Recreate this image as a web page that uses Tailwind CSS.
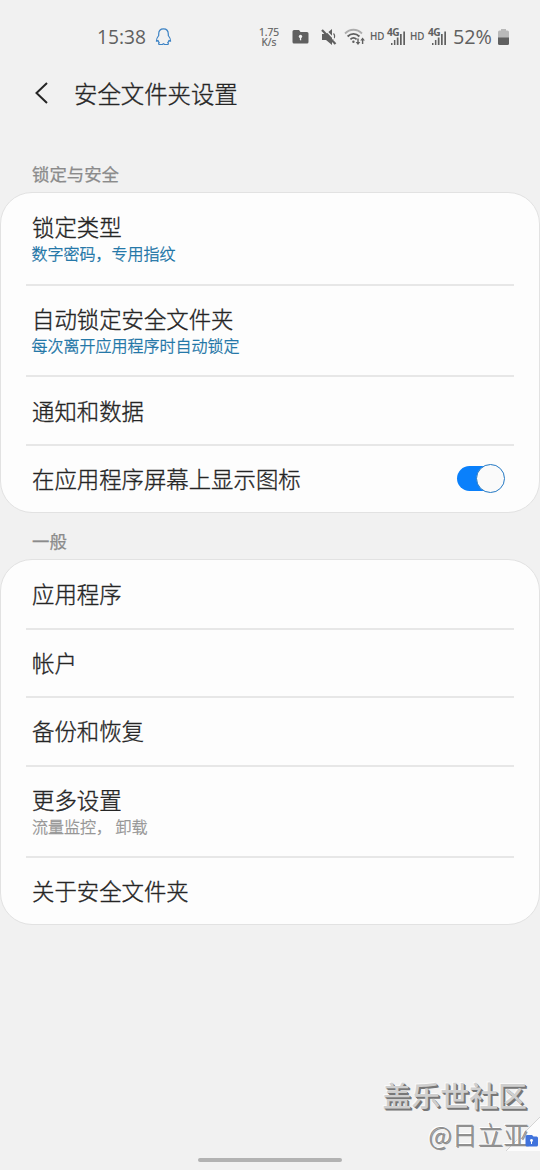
<!DOCTYPE html>
<html lang="zh-CN">
<head>
<meta charset="utf-8">
<title>安全文件夹设置</title>
<script src="https://cdn.jsdelivr.net/npm/@tailwindcss/browser@4"></script>
</head>
<body class="bg-[#f1f1f1]">
<div class="relative w-[540px] h-[1170px] overflow-hidden bg-[#f1f1f1] font-['Noto_Sans_CJK_SC',sans-serif] font-light text-[#252525] flex flex-col">
  <!-- Status bar -->
  <header class="h-[60px] shrink-0 pt-[15px] font-normal text-[#606060] font-['Open_Sans','Noto_Sans',sans-serif]">
    <div class="flex h-[44px] items-center pl-[97px]">
      <span class="w-[58px] text-[19.2px] leading-none whitespace-nowrap">15:38</span>
      <svg class="w-[17px] h-[18px] shrink-0" viewBox="0 0 17 18" fill="none" stroke="#3b82c4" stroke-width="1.2" stroke-linejoin="round"><path d="M8.500 .8C5.400 .8 3.700 3 3.700 6v1.500C2.500 9 1.200 11 1.400 13.200c.6.3 1.200-.5 1.600-.9.3 1 .7 1.700 1.300 2.300-.8.5-.8 1.200-.2 1.900h3.200l1.200-.8 1.200.8h3.200c.6-.7.6-1.400-.2-1.900.6-.6 1-1.300 1.300-2.300.4.4 1 1.200 1.600.9.2-2.200-1.100-4.200-2.300-5.700V6c0-3-1.700-5.200-4.800-5.200z"/></svg>
      <div class="ml-[85px] w-[24px] flex flex-col items-center text-[10.200px] leading-[10px] whitespace-nowrap [-webkit-text-stroke:0.2px]"><span>1.75</span><span>K/s</span></div>
      <svg class="ml-[11px] w-[17px] h-[16px] shrink-0" viewBox="0 0 17 16"><path fill="#606060" d="M2 1h5l1.500 2H15a1.500 1.500 0 0 1 1.500 1.500v8.500a1.500 1.500 0 0 1-1.500 1.500H2A1.500 1.500 0 0 1 .5 13V2.500A1.500 1.500 0 0 1 2 1z"/><circle cx="8.500" cy="7.400" r="1.700" fill="#f1f1f1"/><path fill="#f1f1f1" d="M7.900 8h1.300v3.300H7.900z"/></svg>
      <svg class="ml-[12px] w-[17px] h-[18px] shrink-0" viewBox="0 0 17 18"><path fill="#606060" d="M1 6h4l6-5v16l-6-5H1z"/><path d="M12.500 5.500c1.200 1.200 1.200 4 0 6" fill="none" stroke="#606060" stroke-width="1.200"/><path d="M3.500 1l12.500 13" stroke="#f1f1f1" stroke-width="1.500"/><path d="M1 2l13.500 14" stroke="#606060" stroke-width="2.200"/></svg>
      <svg class="ml-[6px] w-[22px] h-[18px] shrink-0" viewBox="0 0 22 18" fill="none" stroke="#606060" stroke-width="1.800"><path stroke="#adadad" d="M1 5.500c5-5 12-5 17 0"/><path d="M3.600 8.500c3.500-3.500 8.300-3.500 11.800 0M6.400 11.300c1.800-1.700 4.400-1.700 6.200 0"/><circle cx="9.400" cy="13.700" r="1.200" fill="#606060" stroke="none"/><path fill="#606060" stroke="none" d="M13.300 10.500h1.400V14h1.600L14 17l-2.300-3h1.600zM17.900 16h1.400v-3.500h1.600L18.600 9.500l-2.300 3h1.600z"/></svg>
      <span class="ml-[4px] w-[17px] text-[9.800px] leading-none font-semibold">HD</span>
      <div class="relative w-[19px] h-[20px] shrink-0"><span class="absolute left-0 top-0 text-[10.200px] leading-[10px] font-bold tracking-[-0.6px]">4G</span><svg class="w-[19px] h-[20px]" viewBox="0 0 19 20"><path fill="#606060" d="M4 16h1.500v2H4zM6.900 13h1.500v5H6.900zM9.800 10.500h1.700V18H9.800zM13 7h1.700v11H13zM16.300 4.500H18V18h-1.700z"/></svg></div>
      <span class="ml-[4px] w-[18px] text-[9.800px] leading-none font-semibold">HD</span>
      <div class="relative w-[19px] h-[20px] shrink-0"><span class="absolute left-0 top-0 text-[10.200px] leading-[10px] font-bold tracking-[-0.6px]">4G</span><svg class="w-[19px] h-[20px]" viewBox="0 0 19 20"><path fill="#606060" d="M4 16h1.500v2H4zM6.900 13h1.500v5H6.900zM9.800 10.500h1.700V18H9.800zM13 7h1.700v11H13zM16.300 4.500H18V18h-1.700z"/></svg></div>
      <span class="ml-[6px] w-[45px] text-[19.800px] leading-none whitespace-nowrap">52%</span>
      <svg class="w-[11px] h-[16px] shrink-0" viewBox="0 0 11 16"><path fill="#b9b9b9" d="M3 0h5v1.500h1.500A1.500 1.500 0 0 1 11 3v6H0V3a1.500 1.500 0 0 1 1.500-1.500H3z"/><path fill="#606060" d="M0 8.500h11v6a1.500 1.500 0 0 1-1.500 1.500h-8A1.500 1.500 0 0 1 0 14.500z"/></svg>
    </div>
  </header>

  <!-- Title -->
  <div class="h-[66px] shrink-0 flex items-center pl-[34px] [-webkit-text-stroke:0.35px]">
    <svg class="w-[15px] h-[22px]" viewBox="0 0 15 22" fill="none" stroke="#252525" stroke-width="2"><path d="M13 1 2.500 11 13 21"/></svg>
    <h1 class="ml-[25px] text-[23.4px] leading-[24px]">安全文件夹设置</h1>
  </div>

  <h2 class="h-[66px] shrink-0 pt-[39px] pl-[32px] text-[17.4px] leading-[18px] font-normal text-[#8b8b8b] [-webkit-text-stroke:0.25px]">锁定与安全</h2>
  <section class="h-[321px] shrink-0 rounded-[32px] border border-[#e2e2e2] bg-[#fdfdfd] px-[25px] [-webkit-text-stroke:0.35px]">
    <div class="h-[92.500px] border-b-2 border-[#e7e7e7] pl-[6px] pt-[21px]">
      <p class="text-[22.4px] leading-[24px]">锁定类型</p>
      <p class="mt-[6px] -ml-[0.5px] text-[16px] leading-[18px] text-[#1b74a6]">数字密码，专用指纹</p>
    </div>
    <div class="h-[91.500px] border-b-2 border-[#e7e7e7] pl-[6px] pt-[20px]">
      <p class="text-[22.4px] leading-[24px]">自动锁定安全文件夹</p>
      <p class="mt-[6px] -ml-[0.5px] text-[16px] leading-[18px] text-[#1b74a6]">每次离开应用程序时自动锁定</p>
    </div>
    <div class="h-[68.500px] border-b-2 border-[#e7e7e7] pl-[6px] pb-[1px] flex items-center"><p class="text-[22.4px] leading-[24px]">通知和数据</p></div>
    <div class="h-[66.500px] pl-[6px] pr-[9px] flex items-center justify-between">
      <p class="pb-[2px] text-[22.4px] leading-[24px]">在应用程序屏幕上显示图标</p>
      <div class="w-[48px] h-[30px] flex items-center">
        <div class="w-[46px] h-[25px] shrink-0 rounded-full bg-[#0a80fb] flex items-center">
          <div class="ml-[19px] size-[29px] shrink-0 rounded-full border-[1.5px] border-[#2479c4] bg-[#fafafa]"></div>
        </div>
      </div>
    </div>
  </section>

  <h2 class="h-[46px] shrink-0 pt-[19px] pl-[32px] text-[17.4px] leading-[18px] font-normal text-[#8b8b8b] [-webkit-text-stroke:0.25px]">一般</h2>
  <section class="h-[366px] shrink-0 rounded-[32px] border border-[#e2e2e2] bg-[#fdfdfd] px-[25px] [-webkit-text-stroke:0.35px]">
    <div class="h-[69.500px] border-b-2 border-[#e7e7e7] pl-[6px] pb-[1px] flex items-center"><p class="text-[22.4px] leading-[24px]">应用程序</p></div>
    <div class="h-[68.500px] border-b-2 border-[#e7e7e7] pl-[6px] pb-[2px] flex items-center"><p class="text-[22.4px] leading-[24px]">帐户</p></div>
    <div class="h-[68.500px] border-b-2 border-[#e7e7e7] pl-[6px] pb-[2px] flex items-center"><p class="text-[22.4px] leading-[24px]">备份和恢复</p></div>
    <div class="h-[91.500px] border-b-2 border-[#e7e7e7] pl-[6px] pt-[20px]">
      <p class="text-[22.4px] leading-[24px]">更多设置</p>
      <p class="mt-[6px] text-[16px] leading-[18px] text-[#959595]">流量监控， 卸载</p>
    </div>
    <div class="h-[66px] pl-[6px] pb-[2px] flex items-center"><p class="text-[22.4px] leading-[24px]">关于安全文件夹</p></div>
  </section>

  <!-- Navigation handle -->
  <div class="mt-auto mb-[8px] mx-auto w-[144px] h-[4px] rounded-full bg-[#b2b2b2]"></div>

  <!-- Corner badge and signature overlay -->
  <svg class="absolute right-0 bottom-0 w-[170px] h-[110px]" viewBox="0 0 170 110">
    <path d="M170 57v34h-34z" fill="#fcfcfc"/><path d="M136 91l34-34" stroke="#d4d4d4"/>
  </svg>
  <div class="absolute right-[13px] top-[1076px] text-[28.900px] leading-[36px] font-medium whitespace-nowrap text-[#cfcfcf] [text-shadow:1px_1px_0_#777,2px_2px_0_#777,-1px_-1px_0_#fafafa]">盖乐世社区</div>
  <div class="absolute right-[11px] top-[1117px] text-[25.800px] leading-[34px] font-light whitespace-nowrap text-[#8f8f8f] [text-shadow:1px_1px_0_#8f8f8f,-1px_-1px_0_#fff]">@日立亚</div>
  <svg class="absolute right-0 bottom-[20px] w-[16px] h-[20px]" viewBox="0 0 16 20"><path d="M3 5h5l1.500 1.500h3A1.500 1.500 0 0 1 14 8v7a1.500 1.500 0 0 1-1.500 1.500H3A1.500 1.500 0 0 1 1.500 15V6.500A1.500 1.500 0 0 1 3 5z" fill="#4073dc"/><circle cx="7.500" cy="10.500" r="1.400" fill="#fff"/><path d="M7 11h1v3H7z" fill="#fff"/></svg>
</div>
</body>
</html>
